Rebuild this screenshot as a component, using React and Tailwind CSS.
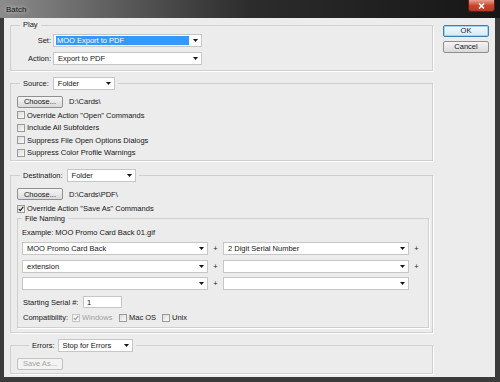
import React from 'react'

function Arrow() {
    return (
        <svg width="5" height="3" viewBox="0 0 5 3" className="shrink-0">
            <path d="M0 0h5L2.5 3z" fill="#151515" />
        </svg>
    )
}

function Select({ w, children, selected }) {
    return (
        <div className={`${w} h-[13px] shrink-0 bg-white border border-[#c6c6c6] flex items-center pl-[2px] pr-[3px]`}>
            {selected ? (
                <span className="flex-1 mr-[4px] h-[9px] leading-[9px] bg-[#3399ff] text-white pl-[1px]">{children}</span>
            ) : (
                <span className="flex-1 pl-[2px] leading-[9px]">{children}</span>
            )}
            <Arrow />
        </div>
    )
}

function Btn({ children, disabled, primary }) {
    const base = 'w-[46px] h-[12px] shrink-0 rounded-[2px] border flex items-center justify-center leading-none'
    if (disabled) return <div className={`${base} border-[#c2c2c2] bg-[#f3f3f3] text-[#a3a3a3]`}>{children}</div>
    if (primary) return <div className={`${base} border-[#3c7fb1] bg-gradient-to-b from-[#f2f8fc] to-[#d9e9f5] shadow-[inset_0_0_0_1px_#9ed4f5]`}>{children}</div>
    return <div className={`${base} border-[#8f8f8f] bg-gradient-to-b from-[#f5f5f5] to-[#dadada]`}>{children}</div>
}

function Check({ checked, disabled, children, w }) {
    return (
        <div className={`${w || ''} flex items-center gap-[2px] h-[12.6px]`}>
            <div className={`w-[8px] h-[8px] shrink-0 border ${disabled ? 'border-[#c4c4c4] bg-[#f4f4f4]' : 'border-[#9a9a9a] bg-gradient-to-br from-[#dcdcdc] to-[#fbfbfb]'} flex items-center justify-center`}>
                {checked && (
                    <svg width="6" height="6" viewBox="0 0 6 6">
                        <path d="M0.8 3.2 2.3 4.7 5.3 0.9" fill="none" stroke={disabled ? '#9a9a9a' : '#1f1f1f'} strokeWidth="1.1" />
                    </svg>
                )}
            </div>
            <span className={disabled ? 'text-[#a0a0a0]' : ''}>{children}</span>
        </div>
    )
}

function Plus({ hidden }) {
    return <div className="w-[15px] shrink-0 text-center">{hidden ? '' : '+'}</div>
}

export default function App() {
    return (
        <div className="w-[500px] h-[382px] flex flex-col bg-[#3b3b3b] font-['Liberation_Sans',Arial,sans-serif] text-[7.5px] text-[#161616] overflow-hidden">
            {/* title bar */}
            <div className="h-[18px] shrink-0 flex items-start justify-between bg-gradient-to-r from-[#8c8c8c] via-[#2c2c2c] to-[#161616]">
                <div className="pl-[6px] pt-[4px] text-[8px] text-[#111] [text-shadow:0_0_4px_#e8e8e8]">Batch</div>
                <div className="mr-[5px] w-[27px] h-[12px] rounded-b-[3px] border border-t-0 border-[#5a1e16] bg-gradient-to-b from-[#e9a08f] via-[#c9452e] to-[#b83a24] flex items-center justify-center">
                    <svg width="7" height="6" viewBox="0 0 7 6">
                        <path d="M1 0.5 6 5.5M6 0.5 1 5.5" stroke="#fff" strokeWidth="1.6" />
                    </svg>
                </div>
            </div>

            {/* client area */}
            <div className="flex-1 ml-[4px] mr-[5px] mb-[5px] bg-[#ececec] flex pl-[6px] pt-[3px]">
                <div className="w-[423px] flex flex-col">
                    {/* Play */}
                    <fieldset className="border border-[#cfcfcf] shadow-[1px_1px_0_#fff] px-[6px] pb-[5px]">
                        <legend className="ml-[3px] px-[3px] leading-[8px]">Play</legend>
                        <div className="flex flex-col gap-[5px] pt-[5px]">
                            <div className="flex items-center">
                                <div className="w-[36px] text-right pr-[2px]">Set:</div>
                                <Select w="w-[149px]" selected>MOO Export to PDF</Select>
                            </div>
                            <div className="flex items-center">
                                <div className="w-[36px] text-right pr-[2px]">Action:</div>
                                <Select w="w-[149px]">Export to PDF</Select>
                            </div>
                        </div>
                    </fieldset>

                    {/* Source */}
                    <fieldset className="mt-[6px] border border-[#cfcfcf] shadow-[1px_1px_0_#fff] px-[6px] pb-[1px]">
                        <legend className="ml-[3px] px-[3px]">
                            <div className="flex items-center gap-[4px]">
                                <span>Source:</span>
                                <Select w="w-[62px]">Folder</Select>
                            </div>
                        </legend>
                        <div className="flex items-center gap-[6px] pt-[6px]">
                            <Btn>Choose...</Btn>
                            <span>D:\Cards\</span>
                        </div>
                        <div className="flex flex-col pt-[1px]">
                            <Check>Override Action "Open" Commands</Check>
                            <Check>Include All Subfolders</Check>
                            <Check>Suppress File Open Options Dialogs</Check>
                            <Check>Suppress Color Profile Warnings</Check>
                        </div>
                    </fieldset>

                    {/* Destination */}
                    <fieldset className="mt-[8px] border border-[#cfcfcf] shadow-[1px_1px_0_#fff] pl-[6px] pr-[3px] pb-[4px]">
                        <legend className="ml-[3px] px-[3px]">
                            <div className="flex items-center gap-[4px]">
                                <span>Destination:</span>
                                <Select w="w-[69px]">Folder</Select>
                            </div>
                        </legend>
                        <div className="flex items-center gap-[6px] pt-[6px]">
                            <Btn>Choose...</Btn>
                            <span>D:\Cards\PDF\</span>
                        </div>
                        <div className="pt-[2px]">
                            <Check checked>Override Action "Save As" Commands</Check>
                        </div>

                        {/* File Naming */}
                        <fieldset className="border border-[#cfcfcf] shadow-[1px_1px_0_#fff] pl-[4px] pr-[2px] pb-[3px]">
                            <legend className="px-[3px] leading-[8px]">File Naming</legend>
                            <div className="pt-[5px] h-[15px] leading-[10px]">Example: MOO Promo Card Back 01.gif</div>
                            <div className="flex flex-col gap-[4.5px] pt-[4.5px]">
                                <div className="flex items-center">
                                    <Select w="w-[186px]">MOO Promo Card Back</Select>
                                    <Plus />
                                    <Select w="w-[186px]">2 Digit Serial Number</Select>
                                    <Plus />
                                </div>
                                <div className="flex items-center">
                                    <Select w="w-[186px]">extension</Select>
                                    <Plus />
                                    <Select w="w-[186px]" />
                                    <Plus />
                                </div>
                                <div className="flex items-center">
                                    <Select w="w-[186px]" />
                                    <Plus />
                                    <Select w="w-[186px]" />
                                    <Plus hidden />
                                </div>
                            </div>
                            <div className="flex items-center pt-[6px]">
                                <div className="w-[61px] pl-[1px]">Starting Serial #:</div>
                                <div className="w-[39px] h-[12px] bg-white border border-[#c6c6c6] flex items-center pl-[3px]">1</div>
                            </div>
                            <div className="flex items-center pt-[3px]">
                                <div className="w-[50px] pl-[1px]">Compatibility:</div>
                                <Check w="w-[47px]" checked disabled>Windows</Check>
                                <Check w="w-[43px]">Mac OS</Check>
                                <Check>Unix</Check>
                            </div>
                        </fieldset>
                    </fieldset>

                    {/* Errors */}
                    <fieldset className="mt-[6px] border border-[#cfcfcf] shadow-[1px_1px_0_#fff] px-[6px] pb-[3px]">
                        <legend className="ml-[12px] px-[3px]">
                            <div className="flex items-center gap-[3px]">
                                <span>Errors:</span>
                                <Select w="w-[75px]">Stop for Errors</Select>
                            </div>
                        </legend>
                        <div className="pt-[6px]">
                            <Btn disabled>Save As...</Btn>
                        </div>
                    </fieldset>
                </div>

                {/* buttons */}
                <div className="ml-[10px] mt-[4px] flex flex-col gap-[4px]">
                    <Btn primary>OK</Btn>
                    <Btn>Cancel</Btn>
                </div>
            </div>
        </div>
    )
}
